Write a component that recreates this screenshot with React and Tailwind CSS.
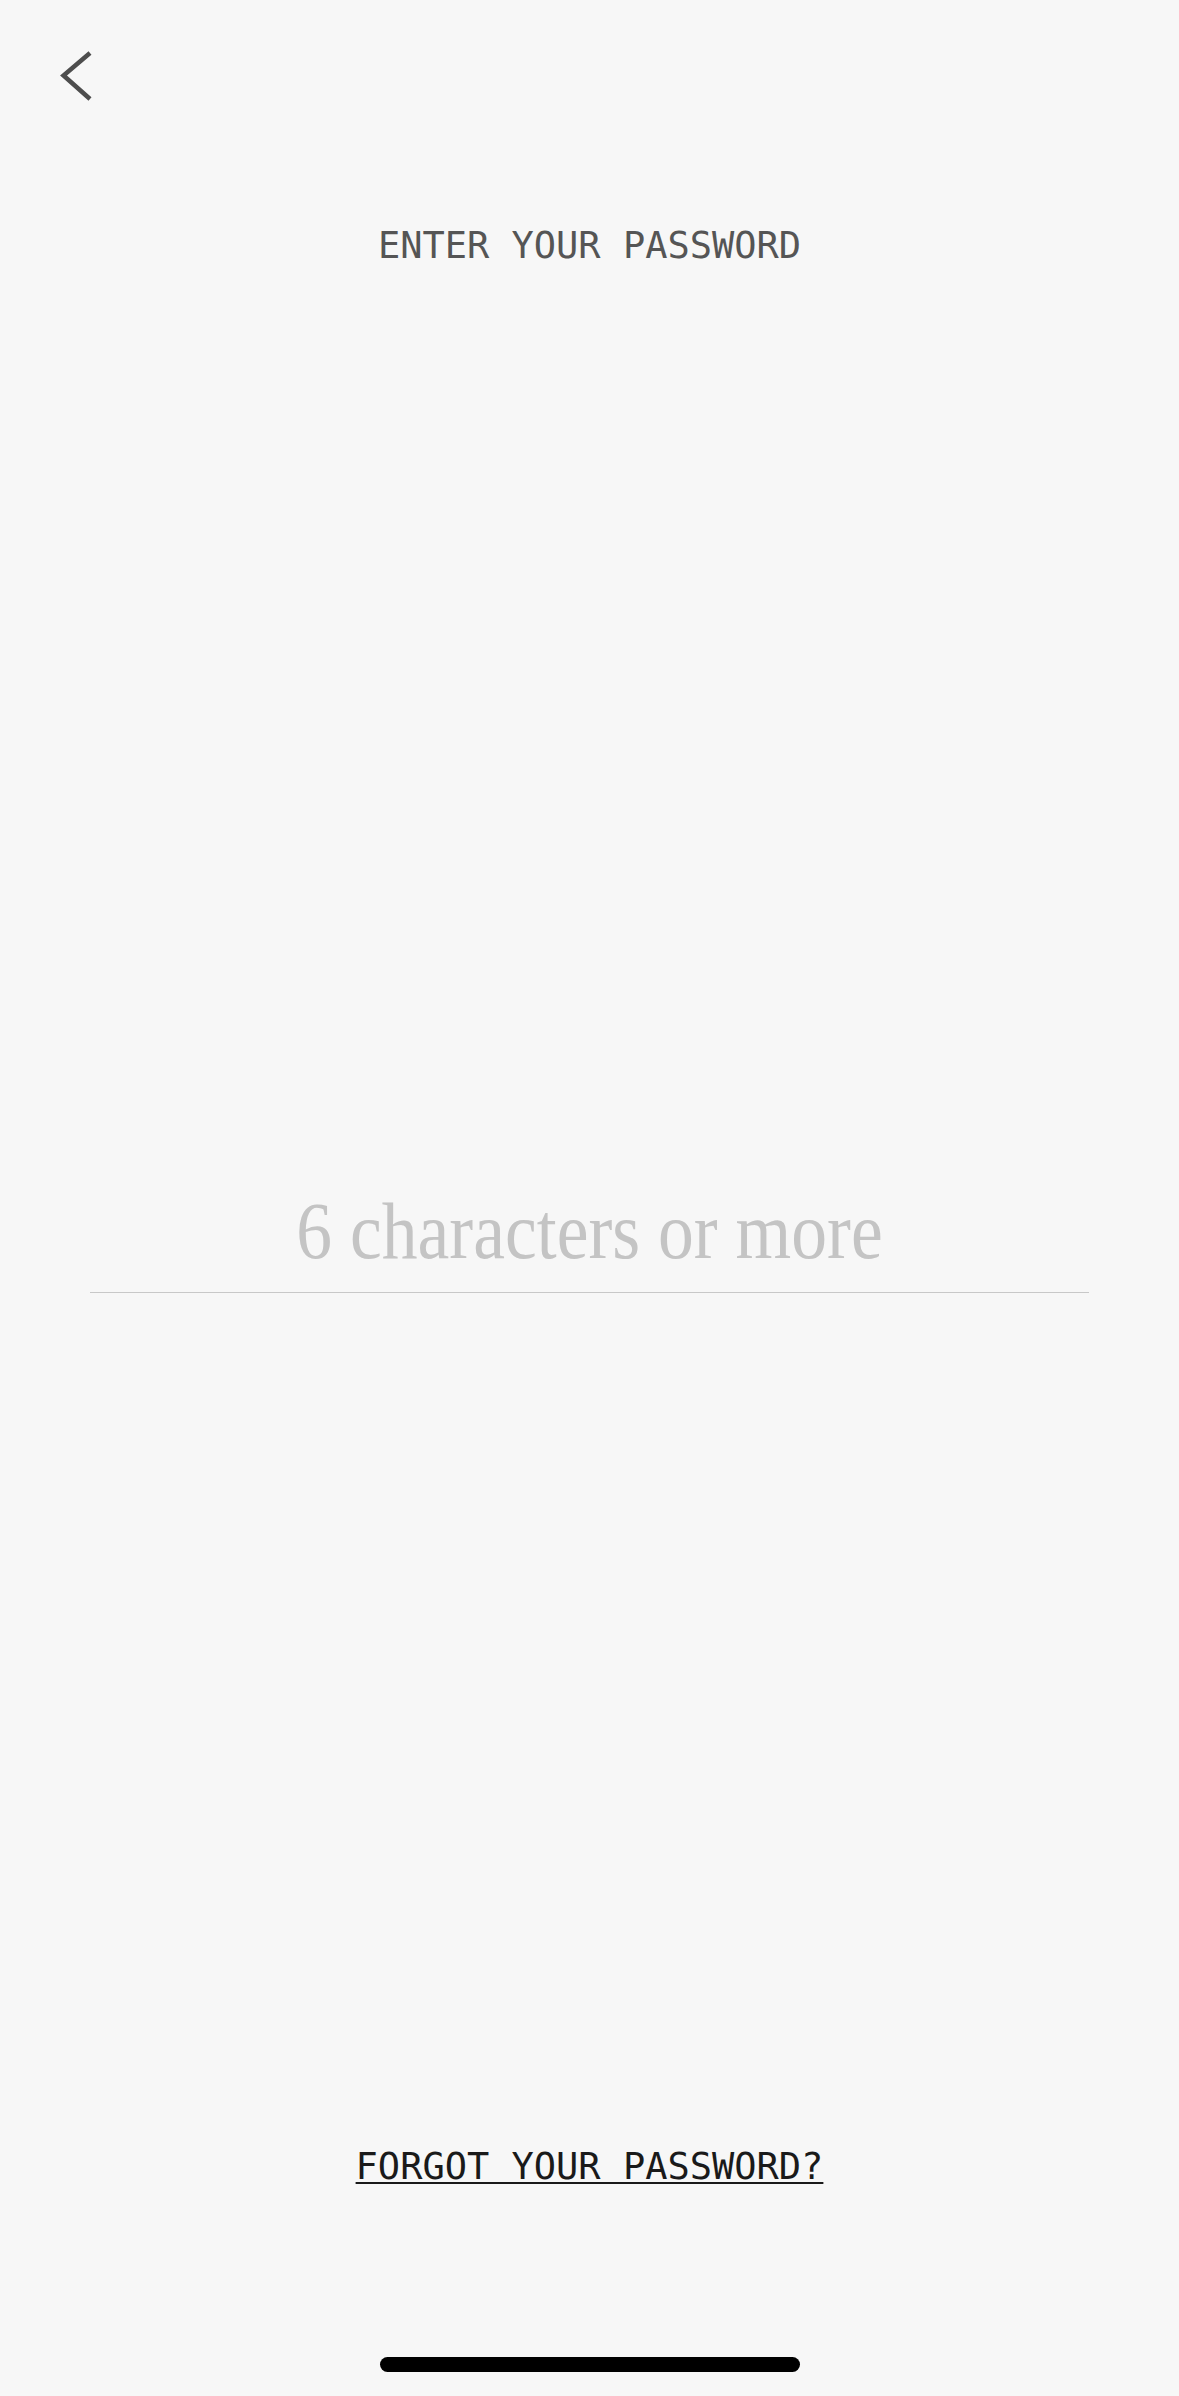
import React, { useState } from "react";

const mono = { fontFamily: '"DejaVu Sans Mono", "Liberation Mono", monospace' };

const BackIcon = () => (
  <svg width="34" height="52" viewBox="0 0 34 52" fill="none">
    <polyline points="30,3 3.5,25.5 30,49" stroke="#4d4d4d" strokeWidth="4.5" />
  </svg>
);

export default function App() {
  const [password, setPassword] = useState("");

  return (
    <div className="h-[2396px] w-full bg-[#f7f7f7] flex flex-col">
      {/* back button */}
      <div className="pt-[50px] pl-[60px]">
        <button className="block">
          <BackIcon />
        </button>
      </div>

      <h1
        className="mt-[125px] text-center text-[37px] leading-none text-[#555555]"
        style={mono}
      >
        ENTER YOUR PASSWORD
      </h1>

      {/* password input */}
      <div className="mt-[917px] mx-[90px] pb-[11px] border-b border-[#c8c8c8]">
        <div className="scale-x-[0.895]">
          <input
            type="password"
            value={password}
            onChange={(e) => setPassword(e.target.value)}
            placeholder="6 characters or more"
            className="w-full h-[100px] bg-transparent text-center text-[80px] text-[#333] placeholder:text-[#c4c4c4] focus:outline-none"
            style={{ fontFamily: '"Liberation Serif", serif' }}
          />
        </div>
      </div>

      <div className="mt-[855px] text-center">
        <button
          className="text-[37px] leading-none text-[#1a1a1a] underline decoration-[2px] underline-offset-[3px]"
          style={mono}
        >
          FORGOT YOUR PASSWORD?
        </button>
      </div>

      {/* home indicator */}
      <div className="mt-[172px] mx-auto w-[420px] h-[15px] rounded-full bg-black" />
    </div>
  );
}
